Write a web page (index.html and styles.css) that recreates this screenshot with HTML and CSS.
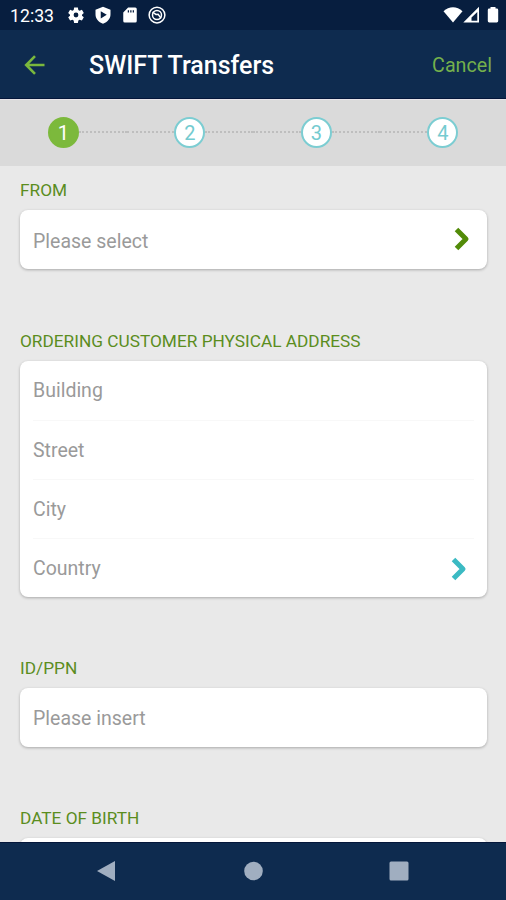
FILE: index.html
```html
<!DOCTYPE html>
<html lang="en">
<head>
<meta charset="utf-8">
<title>SWIFT Transfers</title>
<link rel="stylesheet" href="styles.css">
</head>
<body>
<div class="screen">
  <div class="status">
    <span class="clock">12:33</span>
    <div class="status-icons">
      <svg width="18" height="18" viewBox="0 0 24 24"><path fill-rule="evenodd" d="M9.500 2h5l.6 3.200 1.700 1 3.100-1.100 2.500 4.300L20 11.500v1.500l2.400 2.100-2.500 4.300-3.100-1.100-1.700 1-.6 3.200h-5l-.6-3.200-1.700-1-3.100 1.100-2.500-4.300L4 13v-1.500L1.600 9.400l2.500-4.300 3.100 1.100 1.700-1zM12 8.800a3.200 3.200 0 1 0 0 6.400 3.200 3.200 0 0 0 0-6.400z"/></svg>
      <svg width="18" height="18" viewBox="0 0 24 24"><path fill-rule="evenodd" d="M12 1l10 4v6c0 6-4 10.500-10 12.500C6 21.500 2 17 2 11V5zM9 7v9.500l8-4.700z"/></svg>
      <svg width="18" height="18" viewBox="0 0 24 24"><path fill-rule="evenodd" d="M9.500 2H19a2 2 0 0 1 2 2v16a2 2 0 0 1-2 2H5a2 2 0 0 1-2-2V8.500zM9 5.500v3h1.700v-3zm3.300 0v3H14v-3zm3.300 0v3h1.700v-3z"/></svg>
      <svg width="18" height="18" viewBox="0 0 24 24"><g class="outline"><circle cx="12" cy="12" r="10.500"/><circle cx="12" cy="12" r="6"/><path d="M6 8l4.500 3.300 3-.3 4 5.500"/></g></svg>
    </div>
    <div class="signals">
      <svg width="20" height="18" viewBox="0 0 20 18"><path d="M.5 5.200C6-.1 14-.1 19.500 5.200L10 16.500z"/></svg>
      <svg width="17" height="18" viewBox="0 0 17 18"><path fill-rule="evenodd" d="M.3 16.500L16 .8v15.700zM8.500 11.500v3.300h5.800V6z"/></svg>
      <svg class="battery" width="12" height="18" viewBox="0 0 12 18"><path d="M3.500 1h5v1.500h1.300q1.400 0 1.400 1.400v11.200q0 1.400-1.400 1.400H2.200Q.8 16.500.8 15.100V3.900q0-1.400 1.400-1.400h1.300z"/></svg>
    </div>
  </div>
  <header class="header">
    <svg class="back" width="22" height="20" viewBox="0 0 22 20"><path d="M20.500 10H2.500M11 1.200L2.200 10l8.800 8.800"/></svg>
    <h1>SWIFT Transfers</h1>
    <span class="cancel">Cancel</span>
  </header>
  <ol class="steps">
    <li class="active"><span>1</span></li>
    <li><span>2</span></li>
    <li><span>3</span></li>
    <li><span>4</span></li>
  </ol>
  <main class="form">
    <section class="from">
      <h2>FROM</h2>
      <div class="card"><div class="field">Please select<svg class="chevron" width="18" height="24" viewBox="0 0 18 24"><path d="M3.500 2.500L13 12l-9.500 9.500"/></svg></div></div>
    </section>
    <section class="address">
      <h2>ORDERING CUSTOMER PHYSICAL ADDRESS</h2>
      <div class="card">
        <div class="field">Building</div>
        <div class="field">Street</div>
        <div class="field">City</div>
        <div class="field">Country<svg class="chevron teal" width="18" height="24" viewBox="0 0 18 24"><path d="M3.500 2.500L13 12l-9.500 9.500"/></svg></div>
      </div>
    </section>
    <section class="identity">
      <h2>ID/PPN</h2>
      <div class="card"><div class="field">Please insert</div></div>
    </section>
    <section>
      <h2>DATE OF BIRTH</h2>
      <div class="card"><div class="field"></div></div>
    </section>
  </main>
  <nav class="nav">
    <svg width="20" height="22" viewBox="0 0 20 22"><path d="M19 1v20L1 11z"/></svg>
    <svg width="20" height="20" viewBox="0 0 20 20"><circle cx="10.500" cy="10" r="9.300"/></svg>
    <svg width="20" height="20" viewBox="0 0 20 20"><rect x=".5" y=".5" width="19" height="19" rx="1.500"/></svg>
  </nav>
</div>
</body>
</html>
```
FILE: styles.css
```css
* { box-sizing: border-box; }
body { margin: 0; font-family: Roboto, sans-serif; background: #e9e9e9; }
svg { display: block; flex: none; }
.screen { display: flex; flex-direction: column; height: 900px; overflow: hidden; }

.status { display: flex; align-items: center; height: 30px; flex: none; padding: 0 7px 0 10px; background: #071e3f; color: #fff; }
.status svg { fill: #fff; }
.clock { width: 57px; font-size: 17.700px; line-height: 30px; padding-top: 2px; }
.status-icons { display: flex; gap: 9px; }
.status-icons .outline { fill: none; stroke: #fff; stroke-width: 2; }
.signals { display: flex; margin-left: auto; }
.battery { margin-left: 7px; }

.header { display: flex; align-items: center; height: 69px; flex: none; padding: 1px 14px 0 24px; background: #0e2b4f; border-bottom: 1px solid #04163a; }
.back { fill: none; stroke: #7ab83d; stroke-width: 2.600; }
.header h1 { margin: 3px 0 0 43px; color: #fff; font-size: 25px; font-weight: 500; line-height: 30px; }
.cancel { margin: 2px 0 0 auto; color: #74b04c; font-size: 19.700px; }

.steps { display: grid; grid-template-columns: repeat(4, 1fr); align-items: center; height: 67px; flex: none; margin: 0; padding: 0 0 2px; list-style: none; background: #dadada; border-top: 1px solid #e8e4e8; }
.steps li { display: flex; align-items: center; }
.steps li::before, .steps li::after { content: ""; flex: 1; border-top: 2px dotted #bebebe; }
.steps li:first-child::before, .steps li:last-child::after { border-color: transparent; }
.steps span { width: 31px; height: 31px; border: 2px solid #7ccdd2; border-radius: 50%; background: #fff; color: #74cbd0; font-size: 20px; line-height: 28px; text-align: center; }
.steps .active span { border-color: #7cb93c; background: #7cb93c; color: #fff; }

.form { flex: 1; min-height: 0; overflow: hidden; padding: 12px 19px 0 20px; background: #e9e9e9; }
.form section { margin-bottom: 59px; }
.form .from { margin-bottom: 60px; }
.form h2 { margin: 0; height: 32px; color: #5b8d1e; font-size: 17.250px; font-weight: 400; line-height: 24px; white-space: nowrap; }
.card { padding: 0 13px; border-radius: 8px; background: #fff; box-shadow: 0 1px 3px rgba(0,0,0,.28); }
.field { display: flex; align-items: center; height: 59px; color: #9a9a9a; font-size: 19.500px; padding-top: 2px; }
.from .field { padding-top: 4px; }
.address .field { padding-top: 0; }
.field + .field { border-top: 1px solid #f8f8f8; }
.chevron { margin: -5px 3px 0 auto; fill: none; stroke: #528b08; stroke-width: 5; stroke-linejoin: round; }
.chevron.teal { margin: 2px 6px 0 auto; stroke: #3bbac3; }

.nav { display: flex; align-items: center; justify-content: space-between; height: 58px; flex: none; padding: 0 97px 1px 96px; background: #0e2b4f; border-top: 1px solid #04163a; }
.nav svg { fill: #a0aec0; }
```
